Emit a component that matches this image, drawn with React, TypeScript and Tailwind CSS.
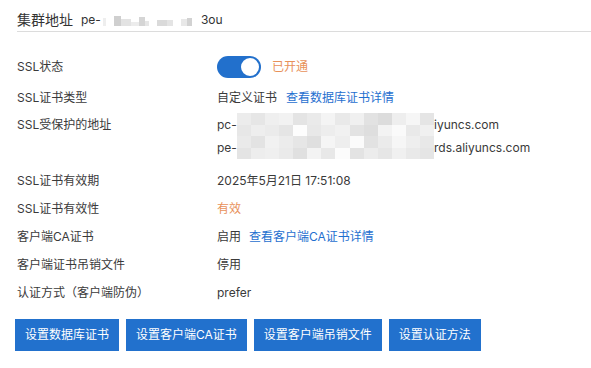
const font = { fontFamily: 'Inter, "Noto Sans CJK SC", sans-serif' };

// mosaic used to hide the private part of the hostnames
const shades = [
  "#ececec", "#e6e6e6", "#efefef", "#f2f2f2", "#e4e4e4", "#eaeaea", "#f4f4f4", "#e9e9e9", "#f0f0f0", "#e2e2e2", "#dcdcdc", "#eeeeee", "#f6f6f6", "#e5e5e5",
  "#e7e7e7", "#eeeeee", "#ebebeb", "#e5e5e5", "#fdfdfd", "#e8e8e8", "#ededed", "#f1f1f1", "#e3e3e3", "#dedede", "#f3f3f3", "#fafafa", "#e9e9e9", "#f0f0f0",
  "#eaeaea", "#e3e3e3", "#f1f1f1", "#ececec", "#e6e6e6", "#dfdfdf", "#f5f5f5", "#eeeeee", "#fbfbfb", "#e2e2e2", "#ebebeb", "#f6f6f6", "#eeeeee", "#e8e8e8",
  "#e4e4e4", "#ededed", "#efefef", "#eaeaea", "#e0e0e0", "#f3f3f3", "#e8e8e8", "#fcfcfc", "#e3e3e3", "#ececec", "#e6e6e6", "#f0f0f0", "#e9e9e9", "#e5e5e5",
];

function Mosaic({ line }: { line: number }) {
  const cells = shades.slice(line * 28, line * 28 + 28);
  return (
    <span className="grid grid-cols-[repeat(14,1fr)] grid-rows-2 w-[197px] h-[23px]">
      {cells.map((c, i) => (
        <span key={i} style={{ background: c }} />
      ))}
    </span>
  );
}

function Row({ label, children }: { label: string; children: React.ReactNode }) {
  return (
    <div className="flex items-center h-[28px]">
      <div className="w-[200px] text-[#3a3a3a]">{label}</div>
      <div className="flex items-center text-[#3a3a3a]">{children}</div>
    </div>
  );
}

const buttons = ["设置数据库证书", "设置客户端CA证书", "设置客户端吊销文件", "设置认证方法"];

export default function App() {
  return (
    <div className="w-[591px] h-[368px] bg-white pl-[17px] text-[12px]" style={font}>
      {/* Header */}
      <div className="flex items-center h-[32px] pt-[8px] border-b border-[#dcdcdc]">
        <span className="text-[14px] text-[#333] leading-[20px]">集群地址</span>
        <span className="flex items-center ml-[8px] text-[12px] text-[#333]">
          pe-
          <span className="flex items-end h-[12px] w-[98px] ml-[2px]">
            <span className="w-[3px] h-[8px] bg-[#eeeeee]" />
            <span className="w-[7px] h-[10px] ml-[8px] bg-[#cfcfcf]" />
            <span className="w-[10px] h-[7px] bg-[#e3e3e3]" />
            <span className="w-[8px] h-[4px] bg-[#ececec]" />
            <span className="w-[6px] h-[9px] bg-[#d5d5d5]" />
            <span className="w-[4px] h-[5px] bg-[#e6e6e6]" />
            <span className="w-[10px] h-[6px] ml-[8px] bg-[#dadada]" />
            <span className="w-[6px] h-[6px] bg-[#e4e4e4]" />
            <span className="w-[6px] h-[7px] ml-[8px] bg-[#e8e8e8]" />
            <span className="w-[5px] h-[8px] bg-[#d2d2d2]" />
          </span>
          3ou
        </span>
      </div>

      {/* Details */}
      <div className="flex flex-col pt-[21px]">
        <Row label="SSL状态">
          <span className="flex items-center justify-end w-[44px] h-[22px] rounded-full bg-[#2270cc] pr-[2px]">
            <span className="w-[18px] h-[18px] rounded-full bg-white" />
          </span>
          <span className="ml-[11px] text-[#e8915a]">已开通</span>
        </Row>
        <div className="mt-[3px]">
          <Row label="SSL证书类型">
            自定义证书
            <span className="ml-[9px] text-[#1f6fcf]">查看数据库证书详情</span>
          </Row>
        </div>
        <div className="flex pt-[1px] pb-[8px]">
          <div className="w-[200px] leading-[23px] text-[#3a3a3a]">SSL受保护的地址</div>
          <div className="flex flex-col text-[#3a3a3a] leading-[23px]">
            <span className="flex items-center">
              <span className="w-[20px]">pc-</span>
              <Mosaic line={0} />
              iyuncs.com
            </span>
            <span className="flex items-center">
              <span className="w-[20px]">pe-</span>
              <Mosaic line={1} />
              rds.aliyuncs.com
            </span>
          </div>
        </div>
        <Row label="SSL证书有效期">2025年5月21日 17:51:08</Row>
        <Row label="SSL证书有效性">
          <span className="text-[#e8915a]">有效</span>
        </Row>
        <Row label="客户端CA证书">
          启用
          <span className="ml-[8px] text-[#1f6fcf]">查看客户端CA证书详情</span>
        </Row>
        <Row label="客户端证书吊销文件">停用</Row>
        <Row label="认证方式（客户端防伪）">prefer</Row>
      </div>

      {/* Actions */}
      <div className="flex gap-[7px] mt-[12px] -ml-[2px]">
        {buttons.map((b) => (
          <button key={b} className="h-[32px] px-[10px] bg-[#2271cd] text-white text-[12px]">
            {b}
          </button>
        ))}
      </div>
    </div>
  );
}
